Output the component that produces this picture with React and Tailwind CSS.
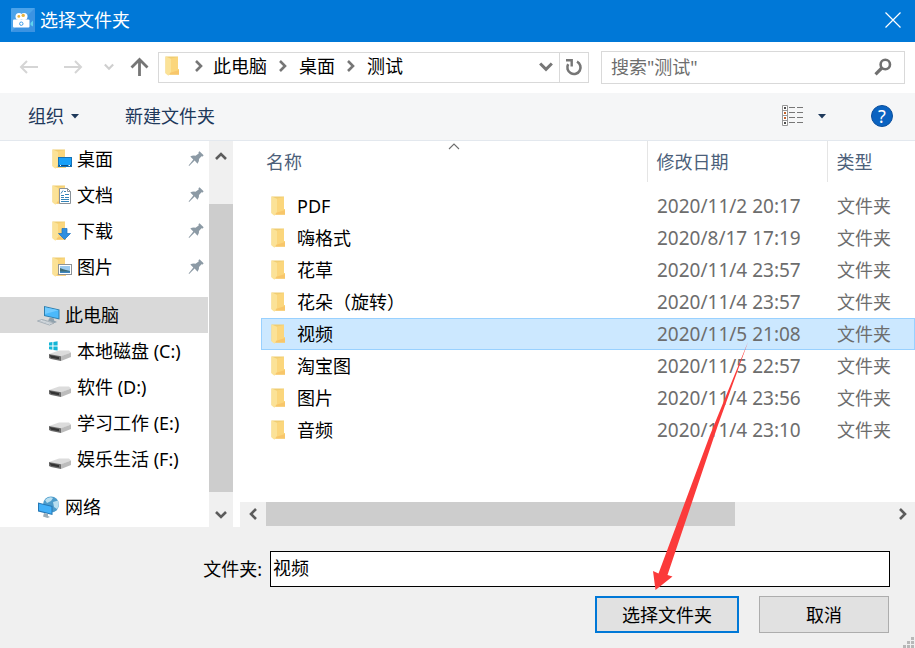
import React from 'react';

const quickAccess = [
  { name: '桌面', kind: 'desktop' },
  { name: '文档', kind: 'document' },
  { name: '下载', kind: 'download' },
  { name: '图片', kind: 'picture' },
];

const drives = [
  { name: '本地磁盘 (C:)', system: true },
  { name: '软件 (D:)' },
  { name: '学习工作 (E:)' },
  { name: '娱乐生活 (F:)' },
];

const folders = [
  { name: 'PDF', date: '2020/11/2 20:17' },
  { name: '嗨格式', date: '2020/8/17 17:19' },
  { name: '花草', date: '2020/11/4 23:57' },
  { name: '花朵（旋转）', date: '2020/11/4 23:57' },
  { name: '视频', date: '2020/11/5 21:08', selected: true },
  { name: '淘宝图', date: '2020/11/5 22:57' },
  { name: '图片', date: '2020/11/4 23:56' },
  { name: '音频', date: '2020/11/4 23:10' },
];

const chevronPaths = {
  up: 'M1 9 L6 4 L11 9',
  down: 'M1 3 L6 8 L11 3',
  left: 'M9 1 L4 6 L9 11',
  right: 'M3 1 L8 6 L3 11',
};

const Chevron = ({ dir, className = 'w-3 h-3 text-[#5c5c5c]', stroke = 2.6 }) => (
  <svg viewBox="0 0 12 12" className={`shrink-0 ${className}`} fill="none" stroke="currentColor" strokeWidth={stroke}>
    <path d={chevronPaths[dir]} />
  </svg>
);

const Caret = () => (
  <svg viewBox="0 0 8 5" className="w-2 h-[5px] shrink-0 text-[#1e395b]">
    <path d="M0 0H8L4 4.5Z" fill="currentColor" />
  </svg>
);

const FolderShape = () => (
  <>
    <path d="M0.5 0.5H13V13H14V18.5H4L0.5 17Z" fill="#f0cd72" />
    <path d="M6 2.5L13 1V13H14V18.5H4.5Z" fill="#fbd67c" />
    <path d="M0.5 0.5L6 2.8V16L3.4 19.8L0.5 17.6Z" fill="#fbe297" />
    <path d="M5.4 16.8L14 14V18.5H4.3Z" fill="#f8c66a" />
  </>
);

const FolderIcon = () => (
  <svg viewBox="0 0 14 20" className="w-[14px] h-5 shrink-0">
    <FolderShape />
  </svg>
);

// Folder with a small badge in the lower right corner
const QuickIcon = ({ kind }) => (
  <svg viewBox="0 0 24 24" className="w-6 h-6 shrink-0">
    <g transform="translate(3 2)">
      <FolderShape />
    </g>
    {kind === 'desktop' && (
      <>
        <rect x="9.5" y="10.5" width="13" height="9" fill="#18a0f8" stroke="#1572b6" />
        <path d="M10 18.5H22" stroke="#0b4f86" strokeWidth="1" />
        <path d="M11 18.5H12M19.5 18.5H21" stroke="#fff" strokeWidth="1" />
      </>
    )}
    {kind === 'document' && (
      <>
        <path d="M10.5 5.5H18.5L21.5 8.5V20.5H10.5Z" fill="#fff" stroke="#8a9299" />
        <path d="M18.5 5.5V8.5H21.5" fill="none" stroke="#8a9299" />
        <path d="M12 10.5L14 7.5M15 8.5H17M12 12.5H15M16 11.5H20M12 14.5H15M16 14.5H20M12 16.5H20M12 18.5H20" stroke="#3484b8" strokeWidth="1" />
      </>
    )}
    {kind === 'download' && (
      <path d="M13 9.5H18V14.5H21.5L15.5 20.5L9.5 14.5H13Z" fill="#2f8fe0" stroke="#1b70bd" strokeWidth="0.7" />
    )}
    {kind === 'picture' && (
      <>
        <rect x="9.5" y="9.5" width="13" height="10" fill="#fff" stroke="#8d9398" />
        <rect x="11" y="11" width="10" height="7" fill="#9bc9ee" />
        <path d="M11 13L15 14.5L21 16V18H11Z" fill="#3f6c75" />
        <path d="M11 16.5H21V18H11Z" fill="#3e86c0" />
      </>
    )}
  </svg>
);

const PinIcon = () => (
  <svg viewBox="0 0 16 16" className="w-4 h-4 shrink-0">
    <path
      d="M11.5 0.3L15.6 4.2L14.8 5.4L13.5 5.2L11 8Q11.4 10.5 9.6 12.7L6.6 9.6L1.1 15L0.6 14.5L5.3 8.4L2.3 5.6Q4.5 4.1 7.5 4.7L10.7 2.4L10.5 1.2Z"
      fill="#8c9aa5"
    />
  </svg>
);

const DriveIcon = ({ system }) => (
  <svg viewBox="0 0 24 24" className="w-6 h-6 shrink-0">
    <path d="M0 15L10 11.5H20L22 13.5L12 17.5Z" fill="#dcdcdc" />
    <path d="M0 15L12 17.2V22L2 20L0 19Z" fill="#6b6b6b" />
    <path d="M0.5 16L10 18V20.3L2 18.8Z" fill="#333" />
    <path d="M12 17.2L22 13.5V18L12 22Z" fill="#bcbcbc" />
    {system && (
      <path d="M0 3.6L3.4 3V6.4H0ZM4.4 2.9L8.6 2.2V6.4H4.4ZM0 7.4H3.4V10.8L0 10.3ZM4.4 7.4H8.6V11.6L4.4 11Z" fill="#12b5d6" />
    )}
  </svg>
);

const ComputerIcon = () => (
  <svg viewBox="0 0 24 24" className="w-6 h-6 shrink-0">
    <path d="M7 3L22.5 6.5V16.5L7 13Z" fill="#2f7fae" />
    <path d="M8 4.3L21.5 7.3V15.3L8 12.2Z" fill="#4bb9fb" />
    <path d="M8 4.3L21.5 7.3L8 11Z" fill="#72cbff" />
    <path d="M13 14.5L17 15.4V17.5L20 19L17.5 20L11 17.5Z" fill="#8fa1ad" />
    <path d="M0.5 18L5 16.5L17 20L12.5 22Z" fill="#e6eaed" stroke="#8c9aa4" strokeWidth="0.7" />
    <path d="M3 18L14 21M5 17.2L15.5 20.3" stroke="#a3afb7" strokeWidth="0.5" />
  </svg>
);

const NetworkIcon = () => (
  <svg viewBox="0 0 24 24" className="w-6 h-6 shrink-0">
    <circle cx="14" cy="9.5" r="8" fill="#4d9ccb" />
    <path d="M8 5Q12 1 16 3L14 6L10 8ZM16 7L21 5.5Q23 10 20 14L17 12Z" fill="#b9dff0" />
    <path d="M1 7.5L15.5 11V20L1 16.5Z" fill="#2477b5" />
    <path d="M2 8.8L14.5 11.8V18.7L2 15.6Z" fill="#42b0f8" />
    <path d="M7 18L11 19V21L13 22L10.5 23L6 21.5Z" fill="#9badb8" />
  </svg>
);

const AppIcon = () => (
  <svg viewBox="0 0 24 24" className="w-6 h-6 shrink-0">
    <rect width="24" height="24" rx="1" fill="#4ba3ea" />
    <path d="M0 24L24 0V24Z" fill="#3b93e2" />
    <circle cx="8" cy="8.5" r="3.5" fill="#fff" />
    <circle cx="13" cy="8.5" r="3.5" fill="#fff" />
    <circle cx="7.8" cy="8.4" r="1.4" fill="#e8b440" />
    <circle cx="12.2" cy="7.4" r="1.7" fill="#e8b440" />
    <rect x="2" y="11.500" width="16.5" height="8" rx="1" fill="#fff" />
    <path d="M19.500 15L22 12.5V18.500L19.500 17Z" fill="#5ed4ee" />
    <circle cx="10.3" cy="15.7" r="1.7" fill="none" stroke="#3b9be8" strokeWidth="1" />
  </svg>
);

const ArrowIcon = ({ dir, className }) => (
  <svg viewBox="0 0 20 20" className={`w-5 h-5 ${className}`} fill="none" stroke="currentColor">
    {dir === 'left' && <path d="M20 10H3M9 4L3 10L9 16" strokeWidth="2" />}
    {dir === 'right' && <path d="M0 10H17M11 4L17 10L11 16" strokeWidth="2" />}
    {dir === 'up' && <path d="M9.500 19V3M1.500 10.500L9.500 2.500L17.500 10.500" strokeWidth="2.8" />}
  </svg>
);

const ViewIcon = () => (
  <svg viewBox="0 0 22 22" className="w-[22px] h-[22px]">
    <path d="M0.5 0.5H5.5V20.5H0.5ZM0.5 5.5H5.5M0.5 10.5H5.5M0.5 15.5H5.5" fill="#fff" stroke="#979797" />
    <path d="M2 3H4M2 18H4" stroke="#4d4d4d" strokeWidth="2" />
    <path d="M2 8H4M2 13H4" stroke="#c0622c" strokeWidth="2" />
    <path d="M7 2.5H13M15 2.5H21M7 7.5H13M15 7.5H21M7 12.5H13M15 12.5H21M7 17.5H13M15 17.5H21" stroke="#777" />
  </svg>
);

const SidebarItem = ({ icon, children, level = 1, active, pinned }) => (
  <li>
    <a
      href="#"
      className={`flex items-center gap-1 h-9 pr-1 ${level === 0 ? 'pl-[37px]' : 'pl-[49px]'} ${active ? 'bg-[#d9d9d9]' : ''}`}
    >
      {icon}
      <span className="flex-1 whitespace-nowrap">{children}</span>
      {pinned && <PinIcon />}
    </a>
  </li>
);

const TitleBar = () => (
  <header className="flex items-center h-[42px] pl-[11px] pr-3 pb-[2px] bg-[#0078d7] text-white">
    <AppIcon />
    <h1 className="flex-1 pl-[5px]">选择文件夹</h1>
    <button type="button" aria-label="关闭" className="flex items-center justify-center w-5 h-5">
      <svg viewBox="0 0 16 16" className="w-4 h-4" stroke="currentColor" strokeWidth="1.2">
        <path d="M0.5 0.5L15.5 15.5M15.5 0.5L0.5 15.5" />
      </svg>
    </button>
  </header>
);

const NavBar = () => (
  <div className="flex items-center h-[51px] pb-px pl-[18px] pr-[10px]">
    <div className="flex items-center w-[140px] shrink-0">
      <button type="button" aria-label="后退">
        <ArrowIcon dir="left" className="text-[#d5d5d5]" />
      </button>
      <button type="button" aria-label="前进" className="ml-[26px]">
        <ArrowIcon dir="right" className="text-[#d5d5d5]" />
      </button>
      <button type="button" aria-label="最近" className="ml-5">
        <Chevron dir="down" className="w-[10px] h-[10px] text-[#cfcfcf]" />
      </button>
      <button type="button" aria-label="上移" className="ml-4">
        <ArrowIcon dir="up" className="text-[#767676]" />
      </button>
    </div>
    <div className="flex items-stretch flex-1 h-[31px] border border-[#d9d9d9]">
      <nav className="flex items-center flex-1 pl-[6px] pb-[2px]">
        <FolderIcon />
        <Chevron dir="right" className="w-3 h-3 ml-[14px] mr-2 text-[#767676]" />
        <a href="#">此电脑</a>
        <Chevron dir="right" className="w-3 h-3 mx-[10px] text-[#767676]" />
        <a href="#">桌面</a>
        <Chevron dir="right" className="w-3 h-3 mx-[10px] text-[#767676]" />
        <a href="#">测试</a>
      </nav>
      <button type="button" aria-label="展开" className="flex items-center justify-center w-[26px]">
        <Chevron dir="down" className="w-[14px] h-[14px] text-[#767676]" />
      </button>
      <button type="button" aria-label="刷新" className="flex items-center justify-center w-[29px] border-l border-[#d9d9d9]">
        <svg viewBox="0 0 18 18" className="w-[18px] h-[18px]" fill="none" stroke="#767676" strokeWidth="2.6">
          <path d="M12 3.6A6.600 6.600 0 1 1 3.200 6.200" />
          <path d="M1 2.300H6.700V8.500" strokeWidth="2.400" />
        </svg>
      </button>
    </div>
    <label className="flex items-center w-[304px] h-[33px] ml-3 pl-[9px] pr-3 pb-px border border-[#d9d9d9]">
      <input
        type="text"
        aria-label="搜索"
        placeholder='搜索"测试"'
        className="flex-1 min-w-0 outline-none placeholder:text-[#6d6d6d]"
      />
      <svg viewBox="0 0 18 18" className="w-[18px] h-[18px]" fill="none" stroke="#707070">
        <circle cx="11.3" cy="6.5" r="4.7" strokeWidth="2.6" />
        <path d="M7.8 10L1.5 16.3" strokeWidth="3.2" />
      </svg>
    </label>
  </div>
);

const Toolbar = () => (
  <div className="flex items-center h-12 pb-px pl-7 pr-[22px] bg-[#f5f6f7] border-b border-[#e3e8ee] text-[#1e395b]">
    <button type="button" className="flex items-center gap-[7px]">
      组织
      <Caret />
    </button>
    <button type="button" className="ml-[46px]">新建文件夹</button>
    <button type="button" aria-label="更改视图" className="flex items-center gap-[14px] ml-auto">
      <ViewIcon />
      <Caret />
    </button>
    <button
      type="button"
      aria-label="帮助"
      className="flex items-center justify-center w-[22px] h-[22px] ml-[45px] rounded-full bg-[#0a63c1] border border-[#0b4f9c] text-white leading-5"
    >
      ?
    </button>
  </div>
);

const Sidebar = () => (
  <aside className="flex w-[233px] shrink-0">
    <div className="flex-1 pb-[2px]">
      <ul>
        {quickAccess.map((item) => (
          <SidebarItem key={item.name} icon={<QuickIcon kind={item.kind} />} pinned>
            {item.name}
          </SidebarItem>
        ))}
      </ul>
      <ul className="my-3">
        <SidebarItem icon={<ComputerIcon />} level={0} active>
          此电脑
        </SidebarItem>
        {drives.map((drive) => (
          <SidebarItem key={drive.name} icon={<DriveIcon system={drive.system} />}>
            {drive.name}
          </SidebarItem>
        ))}
      </ul>
      <ul>
        <SidebarItem icon={<NetworkIcon />} level={0}>
          网络
        </SidebarItem>
      </ul>
    </div>
    <div className="flex flex-col w-6 ml-px bg-[#f0f0f0]">
      <button type="button" aria-label="向上滚动" className="flex items-center justify-center h-[30px]">
        <Chevron dir="up" />
      </button>
      <div className="flex-1 pt-[33px]">
        <div className="h-[288px] bg-[#cdcdcd]"></div>
      </div>
      <button type="button" aria-label="向下滚动" className="flex items-center justify-center h-6">
        <Chevron dir="down" />
      </button>
    </div>
  </aside>
);

const FileTable = () => (
  <table className="w-full table-fixed text-left">
    <colgroup>
      <col />
      <col className="w-[180px]" />
      <col className="w-[88px]" />
    </colgroup>
    <thead className="text-[#4c607a]">
      <tr className="h-[41px]">
        <th className="relative pl-[5px] font-normal">
          名称
          <Chevron dir="up" className="absolute -top-px left-1/2 -translate-x-1/2 w-3 h-3 text-[#6d6d6d]" stroke={1.1} />
        </th>
        <th className="pl-[9px] font-normal border-l border-[#e5e5e5]">修改日期</th>
        <th className="pl-[9px] font-normal border-l border-[#e5e5e5]">类型</th>
      </tr>
    </thead>
    <tbody className="before:block before:h-2">
      {folders.map((folder) => (
        <tr
          key={folder.name}
          className={`h-8 ${folder.selected ? 'bg-[#cce8ff] outline outline-1 -outline-offset-1 outline-[#99d1ff]' : ''}`}
        >
          <td className="pl-[10px]">
            <div className="flex items-center gap-3">
              <FolderIcon />
              {folder.name}
            </div>
          </td>
          <td className="pl-[10px] text-[#6d6d6d] text-[19px] whitespace-nowrap">{folder.date}</td>
          <td className="pl-[10px] text-[#6d6d6d] whitespace-nowrap">文件夹</td>
        </tr>
      ))}
    </tbody>
  </table>
);

const FilePane = () => (
  <main className="flex flex-col flex-1 min-w-0 ml-[7px]">
    <div className="flex-1 pl-[21px]">
      <FileTable />
    </div>
    <div className="flex items-start h-[25px] bg-[#f0f0f0]">
      <button type="button" aria-label="向左滚动" className="flex items-center justify-center w-[26px] h-6">
        <Chevron dir="left" />
      </button>
      <div className="flex-1">
        <div className="w-3/4 h-6 bg-[#cdcdcd]"></div>
      </div>
      <button type="button" aria-label="向右滚动" className="flex items-center justify-center w-6 h-6">
        <Chevron dir="right" />
      </button>
    </div>
  </main>
);

const Footer = () => (
  <footer className="relative flex-1 pt-6 pr-[25px] pb-[15px] bg-[#f0f0f0]">
    <div className="flex items-center">
      <label htmlFor="folder-name" className="w-[270px] pr-2 text-right shrink-0">
        文件夹:
      </label>
      <input
        id="folder-name"
        type="text"
        defaultValue="视频"
        className="flex-1 min-w-0 h-9 px-[2px] pb-1 bg-white border border-black outline-none"
      />
    </div>
    <div className="flex justify-end gap-5 mt-[9px] pr-px">
      <button type="button" className="w-36 h-[37px] bg-[#e1e1e1] border-2 border-[#0078d7]">
        选择文件夹
      </button>
      <button type="button" className="w-[130px] h-[37px] bg-[#e1e1e1] border border-[#adadad]">
        取消
      </button>
    </div>
    <svg viewBox="0 0 12 12" className="absolute right-0 bottom-0 w-3 h-3" fill="#b8b8b8">
      <path d="M8 1H11V4H8ZM8 5H11V8H8ZM4 5H7V8H4ZM8 9H11V12H8ZM4 9H7V12H4ZM0 9H3V12H0Z" />
    </svg>
  </footer>
);

// Hint arrow that runs from the selected row down to the confirm button
const HintArrow = () => (
  <svg viewBox="0 0 100 252" className="absolute top-[340px] right-[165px] w-[100px] h-[252px] pointer-events-none">
    <path d="M98 2L68 85L17.500 235L22.500 236.500L5.500 250L3 231L8.500 233.500L60 95Z" fill="#fb3a3a" />
  </svg>
);

export default function App() {
  return (
    <div className="relative flex flex-col min-h-screen bg-white text-black text-[18px] leading-6 font-['Noto_Sans','Noto_Sans_CJK_SC',sans-serif]">
      <TitleBar />
      <NavBar />
      <Toolbar />
      <div className="flex">
        <Sidebar />
        <FilePane />
      </div>
      <Footer />
      <HintArrow />
    </div>
  );
}
